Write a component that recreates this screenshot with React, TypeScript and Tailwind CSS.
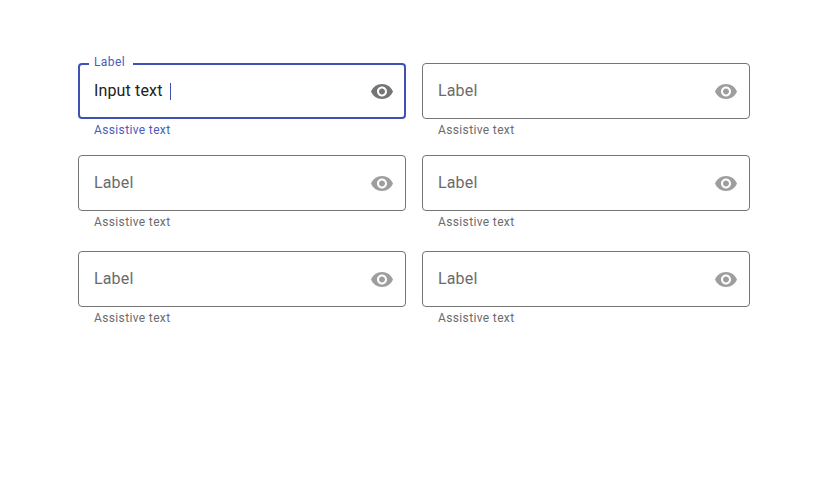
type FieldProps = { focused?: boolean };

function EyeIcon({ focused }: FieldProps) {
  return (
    <svg viewBox="0 -0.5 24 24" className={`h-6 w-6 shrink-0 ${focused ? "fill-[#757575]" : "fill-[#9e9e9e]"}`}>
      <path d="M12 4.5C7 4.5 2.73 7.61 1 12c1.73 4.39 6 7.5 11 7.5s9.27-3.11 11-7.5c-1.73-4.39-6-7.5-11-7.5zM12 17c-2.76 0-5-2.24-5-5s2.24-5 5-5 5 2.24 5 5-2.24 5-5 5zm0-8c-1.66 0-3 1.34-3 3s1.34 3 3 3 3-1.34 3-3-1.34-3-3-3z" />
    </svg>
  );
}

function Field({ focused }: FieldProps) {
  return (
    <div className="w-[328px]">
      <div
        className={`relative flex h-14 items-center justify-between rounded-[4px] ${
          focused ? "border-2 border-[#3f51b5] pr-[10px] pl-[14px]" : "border border-[#757575] pr-[11px] pl-[15px]"
        }`}
      >
        {focused && (
          <span className="absolute -top-[11px] left-[9px] w-11 bg-white pl-[5px] text-[12px] leading-4 tracking-[0.4px] text-[#4a5bbb]">
            Label
          </span>
        )}
        {focused ? (
          <div className="flex items-center text-[16px] leading-6 tracking-[0.15px] text-[#212121]">
            <span className="w-[76px]">Input text</span>
            <span className="mt-px h-[17px] w-px bg-[#3f51b5]" />
          </div>
        ) : (
          <span className="text-[16px] leading-6 tracking-[0.15px] text-[#6b6b6b]">Label</span>
        )}
        <EyeIcon focused={focused} />
      </div>
      <p className={`mt-[3px] pl-4 text-[12px] leading-4 tracking-[0.36px] ${focused ? "text-[#4a5bbb]" : "text-[#6b6b6b]"}`}>
        Assistive text
      </p>
    </div>
  );
}

export default function App() {
  return (
    <main className="h-[482px] w-[828px] bg-white pt-[63px] pl-[78px] font-['Roboto',sans-serif]">
      <div className="flex gap-4">
        <Field focused />
        <Field />
      </div>
      <div className="mt-[17px] flex gap-4">
        <Field />
        <Field />
      </div>
      <div className="mt-[21px] flex gap-4">
        <Field />
        <Field />
      </div>
    </main>
  );
}
